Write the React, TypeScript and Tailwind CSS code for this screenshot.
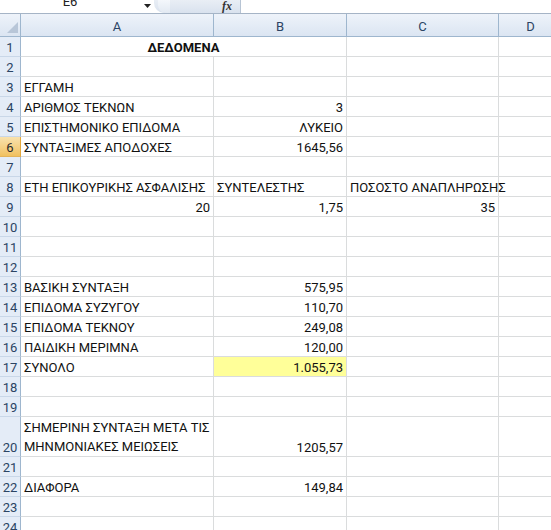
import React from "react";

type Row = {
  n: number;
  tall?: boolean;
  a?: React.ReactNode;
  aRight?: boolean;
  b?: string;
  bHi?: boolean;
  c?: string;
  cRight?: boolean;
  merged?: string;
  sel?: boolean;
};

const rows: Row[] = [
  { n: 1, merged: "ΔΕΔΟΜΕΝΑ" },
  { n: 2 },
  { n: 3, a: "ΕΓΓΑΜΗ" },
  { n: 4, a: "ΑΡΙΘΜΟΣ ΤΕΚΝΩΝ", b: "3" },
  { n: 5, a: "ΕΠΙΣΤΗΜΟΝΙΚΟ ΕΠΙΔΟΜΑ", b: "ΛΥΚΕΙΟ" },
  { n: 6, a: "ΣΥΝΤΑΞΙΜΕΣ ΑΠΟΔΟΧΕΣ", b: "1645,56", sel: true },
  { n: 7 },
  { n: 8, a: "ΕΤΗ ΕΠΙΚΟΥΡΙΚΗΣ ΑΣΦΑΛΙΣΗΣ", b: "ΣΥΝΤΕΛΕΣΤΗΣ", c: "ΠΟΣΟΣΤΟ ΑΝΑΠΛΗΡΩΣΗΣ" },
  { n: 9, a: "20", aRight: true, b: "1,75", c: "35", cRight: true },
  { n: 10 },
  { n: 11 },
  { n: 12 },
  { n: 13, a: "ΒΑΣΙΚΗ ΣΥΝΤΑΞΗ", b: "575,95" },
  { n: 14, a: "ΕΠΙΔΟΜΑ ΣΥΖΥΓΟΥ", b: "110,70" },
  { n: 15, a: "ΕΠΙΔΟΜΑ ΤΕΚΝΟΥ", b: "249,08" },
  { n: 16, a: "ΠΑΙΔΙΚΗ ΜΕΡΙΜΝΑ", b: "120,00" },
  { n: 17, a: "ΣΥΝΟΛΟ", b: "1.055,73", bHi: true },
  { n: 18 },
  { n: 19 },
  {
    n: 20,
    tall: true,
    a: (
      <span className="flex flex-col leading-[19px]">
        <span>ΣΗΜΕΡΙΝΗ ΣΥΝΤΑΞΗ ΜΕΤΑ ΤΙΣ</span>
        <span>ΜΗΝΜΟΝΙΑΚΕΣ ΜΕΙΩΣΕΙΣ</span>
      </span>
    ),
    b: "1205,57",
  },
  { n: 21 },
  { n: 22, a: "ΔΙΑΦΟΡΑ", b: "149,84" },
  { n: 23 },
  { n: 24 },
];

const cell =
  "flex items-end px-[3px] border-r border-b border-[#dadcdd] leading-[16px] whitespace-nowrap overflow-visible";

function RowHeader({ n, sel }: { n: number; sel?: boolean }) {
  return (
    <div
      className={
        "w-[21px] shrink-0 flex items-end justify-center leading-[16px] border-r border-b " +
        (sel
          ? "bg-gradient-to-b from-[#f9e2ad] to-[#f1c15f] border-r-[#e3a83d] border-b-[#e3b35a] text-[#2a2a2a]"
          : "bg-[#e4ecf7] border-r-[#9eb6ce] border-b-[#c9d7e8] text-[#2b4464]")
      }
    >
      {n}
    </div>
  );
}

export default function App() {
  return (
    <div
      className="w-[551px] h-[530px] overflow-hidden bg-white text-[13px] text-[#111]"
      style={{ fontFamily: "Roboto, 'Noto Sans', sans-serif" }}
    >
      {/* name box and formula bar */}
      <div className="h-[14px] flex border-b border-[#a5b4c6] overflow-hidden bg-white">
        <div className="w-[140px] shrink-0 flex justify-center">
          <span className="-mt-[6px] leading-[16px] text-[13px] text-[#222]">E6</span>
        </div>
        <div className="w-[14px] shrink-0 flex justify-center pt-[4px]">
          <svg width="7" height="4" viewBox="0 0 7 4">
            <path d="M0 0h7L3.5 4z" fill="#222" />
          </svg>
        </div>
        <div className="w-[87px] shrink-0 flex items-stretch rounded-bl-[10px] bg-gradient-to-b from-[#e9eef5] to-[#d9e2ee] border-r border-[#b7c4d4]">
          <div className="ml-[4px] w-[12px] rounded-bl-[8px] bg-gradient-to-b from-[#f4f7fb] to-[#e2e9f2]" />
          <div className="flex-1" />
          <span
            className="pr-[8px] -mt-[3px] text-[12px] italic font-bold text-[#333]"
            style={{ fontFamily: "'Liberation Serif', serif" }}
          >
            fx
          </span>
        </div>
        <div className="flex-1 bg-white" />
      </div>

      {/* column headers */}
      <div className="h-[23px] flex text-[#2b4464]">
        <div className="w-[21px] shrink-0 relative bg-gradient-to-b from-[#eef3fa] to-[#dbe5f2] border-r border-b border-[#9eb6ce]">
          <svg className="absolute right-[2px] bottom-[3px]" width="11" height="11" viewBox="0 0 11 11">
            <path d="M11 0V11H0z" fill="#b8c6d8" />
          </svg>
        </div>
        {[
          ["A", "w-[193px]"],
          ["B", "w-[133px]"],
          ["C", "w-[152px]"],
          ["D", "w-[64px]"],
        ].map(([l, w]) => (
          <div
            key={l}
            className={
              w +
              " shrink-0 flex items-center justify-center pt-[3px] bg-gradient-to-b from-[#eef3fa] to-[#dbe5f2] border-r border-b border-[#9eb6ce]"
            }
          >
            {l}
          </div>
        ))}
      </div>

      {/* sheet rows */}
      {rows.map((r) => (
        <div key={r.n} className={(r.tall ? "h-[40px]" : "h-[20px]") + " flex"}>
          <RowHeader n={r.n} sel={r.sel} />
          {r.merged ? (
            <div className={cell + " w-[326px] shrink-0 justify-center font-bold"}>{r.merged}</div>
          ) : (
            <>
              <div
                className={
                  cell + " w-[193px] shrink-0 relative z-10 " + (r.aRight ? "justify-end" : "justify-start")
                }
              >
                {r.a}
              </div>
              <div
                className={
                  cell +
                  " w-[133px] shrink-0 " +
                  (r.bHi ? "bg-[#ffff99] " : "") +
                  (r.n === 8 ? "justify-start" : "justify-end")
                }
              >
                {r.b}
              </div>
            </>
          )}
          <div className={cell + " w-[152px] shrink-0 " + (r.cRight ? "justify-end" : "justify-start")}>
            {r.c}
          </div>
          <div className={cell + " w-[64px] shrink-0"} />
        </div>
      ))}
    </div>
  );
}
